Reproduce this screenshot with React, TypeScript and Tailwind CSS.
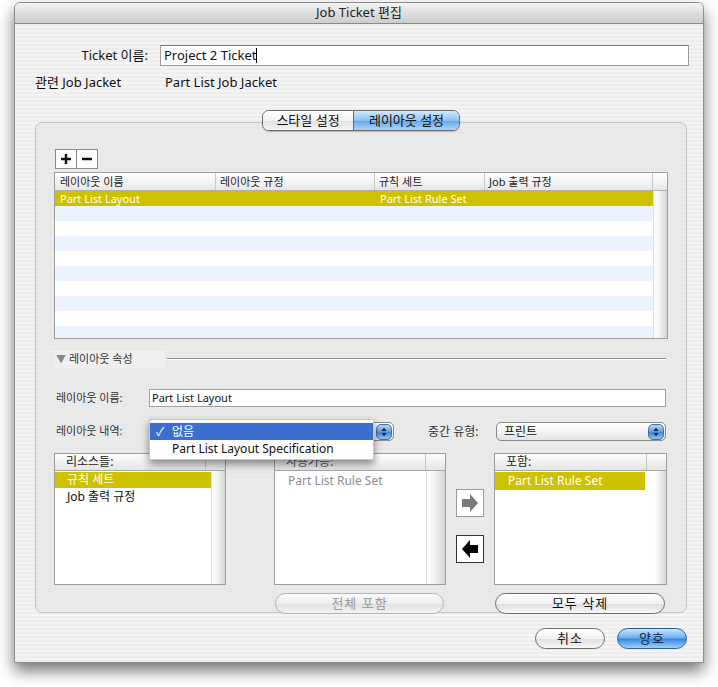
import React from 'react';

const stripes = [0, 1, 2, 3, 4, 5, 6, 7, 8];

function Stepper() {
    return (
        <div className="w-[16px] h-[16px] rounded-[5px] bg-[linear-gradient(#b9d8f7,#5e9be0_50%,#3f86d8_51%,#8cc2f3)] border border-[#4a6f9c] flex items-center justify-center">
            <svg width="6" height="10" viewBox="0 0 6 10">
                <polygon points="3,0.5 5.5,4 0.5,4" fill="#1b2a40" />
                <polygon points="0.5,6 5.5,6 3,9.5" fill="#1b2a40" />
            </svg>
        </div>
    );
}

function ListHeader({ label, muted }: { label: string; muted?: boolean }) {
    return (
        <div className="h-[17px] flex border-b border-[#a9a9a9] bg-[linear-gradient(#ffffff,#f1f1f1_50%,#e4e4e4)] text-[12px] leading-[16px]">
            <div className={`flex-1 pl-[11px] ${muted ? 'text-[#555]' : 'text-[#222]'}`}>{label}</div>
            <div className="w-[20px] border-l border-[#c4c4c4]" />
        </div>
    );
}

function ScrollTrack({ w }: { w: string }) {
    return <div className={`${w} h-full bg-[linear-gradient(90deg,#ffffff,#f4f4f4_40%,#d4d4d4)] border-l border-[#e0e0e0]`} />;
}

function AquaButton({ label, w, disabled, blue }: { label: string; w: string; disabled?: boolean; blue?: boolean }) {
    const tone = blue
        ? 'bg-[linear-gradient(#c9e3fb,#6fb0ef_45%,#3b8ae0_55%,#9fd0fa)] border-[#2d5f97] text-[#10233d]'
        : disabled
        ? 'bg-[linear-gradient(#fbfbfb,#ececec_50%,#e2e2e2_55%,#f3f3f3)] border-[#b4b4b4] text-[#9a9a9a]'
        : 'bg-[linear-gradient(#ffffff,#f2f2f2_50%,#e1e1e1_55%,#f7f7f7)] border-[#6e6e6e] text-[#111]';
    return (
        <div className={`${w} h-[21px] rounded-full border ${tone} flex items-center justify-center text-[13px] tracking-[1px]`}>
            {label}
        </div>
    );
}

export default function App() {
    return (
        <div className="w-[718px] h-[687px] bg-white pt-[2px] pl-[14px] font-['Noto_Sans','Noto_Sans_CJK_KR',sans-serif] text-[#111]">
            <div className="w-[690px] h-[661px] flex flex-col rounded-t-[6px] border border-[#8e8e8e] shadow-[0_8px_16px_rgba(0,0,0,0.55)] overflow-hidden bg-[repeating-linear-gradient(0deg,#ededed_0px,#ededed_2px,#f4f4f4_2px,#f4f4f4_4px)]">
                {/* title bar */}
                <div className="h-[21px] shrink-0 border-b border-[#8a8a8a] bg-[linear-gradient(#f4f4f4,#dedede_50%,#cdcdcd)] flex items-center justify-center text-[13px] text-[#222]">
                    Job Ticket 편집
                </div>

                <div className="flex flex-col">
                    {/* ticket name */}
                    <div className="mt-[21px] flex items-center h-[21px]">
                        <div className="w-[133px] text-right text-[13px]">Ticket 이름:</div>
                        <div className="ml-[12px] w-[529px] h-[21px] bg-white border border-[#9c9c9c] border-t-[#7a7a7a] flex items-center pl-[3px] text-[13px]">
                            Project 2 Ticket<span className="w-px h-[15px] bg-black" />
                        </div>
                    </div>
                    <div className="mt-[8px] flex items-center h-[17px] text-[13px]">
                        <div className="ml-[20px] w-[130px]">관련 Job Jacket</div>
                        <div>Part List Job Jacket</div>
                    </div>

                    {/* group box */}
                    <div className="relative ml-[20px] mt-[31px] w-[652px] h-[491px] rounded-[7px] border border-[#c2c2c2] bg-[#e6e6e6]/70 pl-[18px] pt-[26px]">
                        <div className="absolute -top-[13px] left-[226px] flex h-[21px] rounded-[7px] border border-[#6b6b6b] overflow-hidden text-[13px] shadow-[0_1px_1px_rgba(0,0,0,0.2)]">
                            <div className="w-[91px] flex items-center justify-center bg-[linear-gradient(#ffffff,#f2f2f2_50%,#e3e3e3_55%,#f6f6f6)] border-r border-[#6b6b6b]">스타일 설정</div>
                            <div className="w-[105px] flex items-center justify-center bg-[linear-gradient(#d3e8fb,#8fc2f1_50%,#69a9ea_55%,#a9d6fb)]">레이아웃 설정</div>
                        </div>

                        {/* + - */}
                        <div className="flex ml-[1px] h-[20px]">
                            <div className="w-[22px] h-[20px] border border-[#8c8c8c] bg-white flex items-center justify-center">
                                <svg width="12" height="12" viewBox="0 0 12 12"><path d="M6 1v10M1 6h10" stroke="#111" strokeWidth="2.4" /></svg>
                            </div>
                            <div className="w-[21px] h-[20px] border border-l-0 border-[#8c8c8c] bg-white flex items-center justify-center">
                                <svg width="12" height="12" viewBox="0 0 12 12"><path d="M1 6h10" stroke="#111" strokeWidth="2.4" /></svg>
                            </div>
                        </div>

                        {/* table */}
                        <div className="mt-[3px] w-[614px] h-[167px] border border-[#9d9d9d] bg-white flex flex-col text-[11px]">
                            <div className="h-[18px] shrink-0 flex border-b border-[#b0b0b0] bg-[linear-gradient(#ffffff,#f3f3f3_50%,#e6e6e6)] text-[#222] leading-[17px]">
                                <div className="w-[161px] pl-[5px] border-r border-[#c8c8c8]">레이아웃 이름</div>
                                <div className="w-[159px] pl-[4px] border-r border-[#c8c8c8]">레이아웃 규정</div>
                                <div className="w-[110px] pl-[4px] border-r border-[#c8c8c8]">규칙 세트</div>
                                <div className="w-[168px] pl-[4px] border-r border-[#c8c8c8]">Job 출력 규정</div>
                                <div className="flex-1" />
                            </div>
                            <div className="flex flex-1 min-h-0">
                                <div className="w-[598px] flex flex-col overflow-hidden">
                                    <div className="h-[15px] shrink-0 flex bg-[#cdc100] text-white leading-[15px]">
                                        <div className="w-[325px] pl-[5px]">Part List Layout</div>
                                        <div>Part List Rule Set</div>
                                    </div>
                                    {stripes.map((i) => (
                                        <div key={i} className={`h-[15px] shrink-0 ${i % 2 === 0 ? 'bg-[#edf3fe]' : 'bg-white'}`} />
                                    ))}
                                </div>
                                <ScrollTrack w="w-[14px]" />
                            </div>
                        </div>

                        {/* disclosure */}
                        <div className="mt-[11px] flex items-center h-[18px] w-[612px]">
                            <div className="w-[111px] h-[18px] bg-[#efefef] flex items-center pl-[2px] text-[11px] text-[#333]">
                                <span className="text-[#8a8a8a] text-[10px] mr-[3px]">▼</span>레이아웃 속성
                            </div>
                            <div className="flex-1 ml-[2px] border-t border-[#8f8f8f] border-b border-b-white" />
                        </div>

                        {/* layout name */}
                        <div className="mt-[21px] flex items-center h-[18px] text-[11px]">
                            <div className="w-[95px] pl-[2px] text-[#333]">레이아웃 이름:</div>
                            <div className="w-[517px] h-[18px] bg-white border border-[#a0a0a0] flex items-center pl-[2px]">Part List Layout</div>
                        </div>

                        {/* layout spec + media */}
                        <div className="relative mt-[15px] flex items-center h-[19px] text-[11px]">
                            <div className="w-[95px] pl-[2px] text-[#333]">레이아웃 내역:</div>
                            <div className="w-[245px] h-[19px] rounded-[5px] border border-[#8a8a8a] bg-[linear-gradient(#ffffff,#f0f0f0_50%,#e4e4e4)] flex items-center justify-end pr-px">
                                <Stepper />
                            </div>
                            <div className="ml-[34px] w-[68px] text-[12px] text-[#333]">중간 유형:</div>
                            <div className="w-[170px] h-[19px] rounded-[5px] border border-[#8a8a8a] bg-[linear-gradient(#ffffff,#f2f2f2_50%,#e4e4e4)] flex items-center justify-between pl-[7px] pr-px text-[12px]">
                                프린트
                                <Stepper />
                            </div>

                            {/* open menu */}
                            <div className="absolute left-[95px] -top-[3px] w-[225px] h-[41px] bg-white/95 border border-[#c8c8c8] shadow-[0_4px_8px_rgba(0,0,0,0.45)] pt-[3px] text-[12px] z-10">
                                <div className="h-[17px] bg-[#3a6fd0] text-white flex items-center">
                                    <span className="w-[22px] pl-[6px]">✓</span>없음
                                </div>
                                <div className="h-[17px] flex items-center pl-[22px]">Part List Layout Specification</div>
                            </div>
                        </div>

                        {/* lists */}
                        <div className="mt-[12px] flex h-[132px] text-[12px]">
                            <div className="w-[172px] h-full border border-[#9d9d9d] bg-white flex flex-col">
                                <ListHeader label="리소스들:" />
                                <div className="flex flex-1">
                                    <div className="flex-1 pt-px">
                                        <div className="h-[16px] bg-[#cdc100] text-white pl-[12px] leading-[16px]">규칙 세트</div>
                                        <div className="h-[16px] pl-[12px] leading-[16px] mt-[1px]">Job 출력 규정</div>
                                    </div>
                                    <ScrollTrack w="w-[14px]" />
                                </div>
                            </div>

                            <div className="ml-[48px] w-[172px] h-full border border-[#9d9d9d] bg-white flex flex-col">
                                <ListHeader label="사용가능:" muted />
                                <div className="flex flex-1">
                                    <div className="flex-1 pt-[2px] pl-[13px] text-[#8c8c8c] leading-[16px]">Part List Rule Set</div>
                                    <ScrollTrack w="w-[19px]" />
                                </div>
                            </div>

                            <div className="ml-[10px] w-[28px] flex flex-col pt-[36px] gap-[18px]">
                                <div className="w-[28px] h-[28px] border border-[#9a9a9a] bg-white flex items-center justify-center">
                                    <svg width="20" height="20" viewBox="0 0 20 20"><polygon points="2,6 10,6 10,1 18,10 10,19 10,14 2,14" fill="#7b7b7b" /></svg>
                                </div>
                                <div className="w-[28px] h-[28px] border border-[#333] bg-white flex items-center justify-center">
                                    <svg width="20" height="20" viewBox="0 0 20 20"><polygon points="18,6 10,6 10,1 2,10 10,19 10,14 18,14" fill="#000" /></svg>
                                </div>
                            </div>

                            <div className="ml-[10px] w-[173px] h-full border border-[#9d9d9d] bg-white flex flex-col">
                                <ListHeader label="포함:" />
                                <div className="flex flex-1">
                                    <div className="flex-1 pt-px">
                                        <div className="h-[18px] bg-[#cdc100] text-white pl-[13px] leading-[18px]">Part List Rule Set</div>
                                    </div>
                                    <div className="w-[21px] h-full bg-[linear-gradient(90deg,#ffffff,#ffffff_45%,#d6d6d6)]" />
                                </div>
                            </div>
                        </div>

                        {/* group buttons */}
                        <div className="mt-[8px] flex">
                            <div className="ml-[221px]">
                                <AquaButton label="전체 포함" w="w-[169px]" disabled />
                            </div>
                            <div className="ml-[51px]">
                                <AquaButton label="모두 삭제" w="w-[170px]" />
                            </div>
                        </div>
                    </div>

                    {/* dialog buttons */}
                    <div className="mt-[15px] flex justify-end pr-[16px] gap-[12px]">
                        <AquaButton label="취소" w="w-[70px]" />
                        <AquaButton label="양호" w="w-[70px]" blue />
                    </div>
                </div>
            </div>
        </div>
    );
}
